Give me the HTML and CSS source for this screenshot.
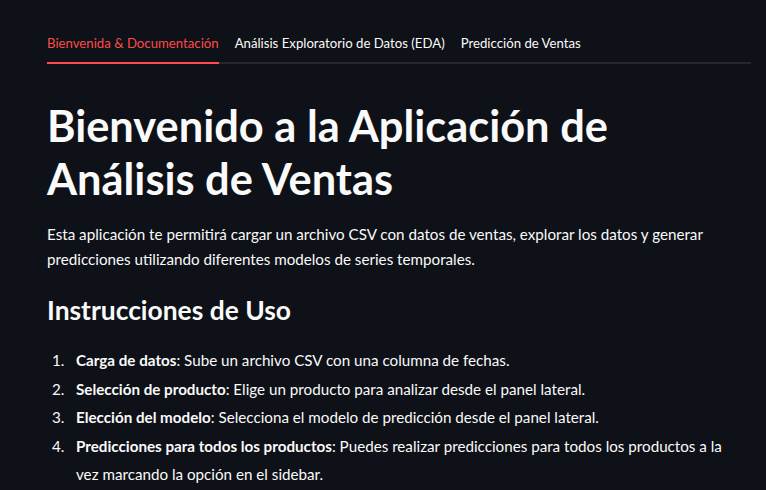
FILE: index.html
```html
<!DOCTYPE html>
<html lang="es">
<head>
<meta charset="utf-8">
<link rel="stylesheet" href="styles.css">
</head>
<body>
<main class="page">
  <nav class="tabs">
    <div class="tab active">Bienvenida &amp; Documentación</div>
    <div class="tab">Análisis Exploratorio de Datos (EDA)</div>
    <div class="tab">Predicción de Ventas</div>
  </nav>
  <h1 class="title">Bienvenido a la Aplicación de Análisis de Ventas</h1>
  <p class="intro">Esta aplicación te permitirá cargar un archivo CSV con datos de ventas, explorar los datos y generar predicciones utilizando diferentes modelos de series temporales.</p>
  <h3 class="subtitle">Instrucciones de Uso</h3>
  <ol class="steps">
    <li><strong>Carga de datos</strong>: Sube un archivo CSV con una columna de fechas.</li>
    <li><strong>Selección de producto</strong>: Elige un producto para analizar desde el panel lateral.</li>
    <li><strong>Elección del modelo</strong>: Selecciona el modelo de predicción desde el panel lateral.</li>
    <li><strong>Predicciones para todos los productos</strong>: Puedes realizar predicciones para todos los productos a la vez marcando la opción en el sidebar.</li>
  </ol>
</main>
</body>
</html>
```

FILE: styles.css
```css
html, body {
  margin: 0;
  padding: 0;
  background: #0e1117;
  color: #fafafa;
  font-family: Lato, "Noto Sans", sans-serif;
  overflow: hidden;
}

.page {
  width: 704px;
  margin: 0 0 0 47px;
  padding-top: 22px;
}

.tabs {
  display: flex;
  gap: 16px;
  height: 42px;
  box-shadow: inset 0 -2px 0 #262730;
}

.tab {
  font-size: 13.2px;
  line-height: 42px;
  white-space: nowrap;
}

.tab.active {
  color: #ff4b4b;
  box-shadow: inset 0 -2px 0 #ff4b4b;
}

.title {
  margin: 35px 0 0;
  font-size: 43.4px;
  line-height: 52.8px;
  font-weight: 700;
  width: 620px;
}

.intro {
  margin: 17px 0 0;
  font-size: 15.2px;
  line-height: 25.6px;
}

.subtitle {
  margin: 21px 0 0;
  font-size: 26.4px;
  line-height: 33.6px;
  font-weight: 700;
}

.steps {
  width: 690px;
  margin: 19px 0 0;
  padding: 0;
  list-style: none;
  counter-reset: step;
  font-size: 15.2px;
  line-height: 28.4px;
}

.steps li {
  counter-increment: step;
  padding-left: 29px;
  position: relative;
}

.steps li::before {
  content: counter(step) ".";
  position: absolute;
  left: 5px;
  top: 0;
}

.steps strong {
  font-weight: 700;
}
```
